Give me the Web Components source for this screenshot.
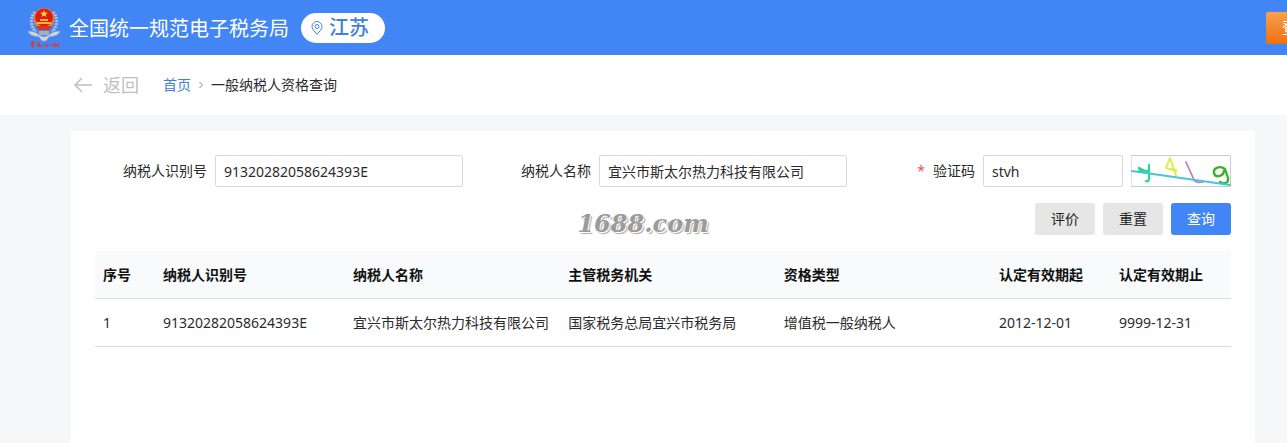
<!DOCTYPE html>
<html lang="zh-CN">
<head>
<meta charset="utf-8">
<title>一般纳税人资格查询</title>
<style>
  html { background: #f5f7f9; }
  body {
    margin: 0;
    font: 14px/20px "Noto Sans", "Noto Sans CJK SC", sans-serif;
    color: #2b2b2b;
  }
</style>
</head>
<body>
<tax-page></tax-page>

<template id="tax-emblem">
  <style>
    :host { display: block; width: 34px; height: 44px; }
    svg { display: block; width: 100%; height: 100%; }
  </style>
  <svg viewBox="0 0 34 44" aria-hidden="true">
    <path d="M8 6C3 11 3 20 9 26M26 6c5 5 5 14-1 20" fill="none" stroke="#b9c1d2" stroke-width="3" stroke-dasharray="2 1"/>
    <path d="M1 25c4 0 8 1 11 4l5 2 5-2c3-3 7-4 11-4-1 4-5 5-11 6l-3 4h-4l-3-4C6 30 2 29 1 25z" fill="#d0d5dd" stroke="#8b98b5" stroke-width=".6"/>
    <circle cx="17" cy="12.500" r="10.500" fill="#e38a35"/>
    <circle cx="17" cy="11.500" r="9" fill="#e01c12"/>
    <path d="M17 4l1 2.600 2.800.1-2.200 1.700.8 2.700-2.400-1.500-2.400 1.500.8-2.700-2.200-1.700 2.800-.1z" fill="#ffd84a"/>
    <path d="M10 16h14v2H10zM13 13h8v2h-8z" fill="#f6b739"/>
    <path d="M9 20h16l-3 4H12z" fill="#d8381c"/>
    <path d="M12 25h10v4H12z" fill="#a9aeb9"/>
    <path d="M3 37h5M5.500 35v7M4 39h3M10 38l2-1v4M11 40h4M18 38v3M20 38l1 3M23 39h2M27 37l1 4M26 39h6M31 37v4" fill="none" stroke="#e03a35" stroke-width="1.500"/>
  </svg>
</template>

<template id="tax-header">
  <style>
    :host {
      display: flex; align-items: center; height: 55px; padding-left: 27px;
      overflow: hidden; background: #4285f4; color: #fff;
    }
    h1 { margin: 2px 12px 0 8px; font-size: 20px; line-height: 28px; font-weight: 400; white-space: nowrap; }
    .region {
      display: flex; align-items: center; gap: 6px; box-sizing: border-box;
      height: 30px; padding: 0 16px 0 10px; border-radius: 15px;
      background: #fff; color: #4481d8; font-size: 20px; font-weight: 500; white-space: nowrap;
    }
    svg { width: 12px; height: 14px; }
    button {
      flex: none; width: 64px; height: 32px; margin: 0 -43px 0 auto; padding: 0;
      border: 0; border-radius: 2px; color: #fff; font: inherit; font-size: 16px;
      background: linear-gradient(#f7a04e, #f0700f);
    }
  </style>
  <tax-emblem></tax-emblem>
  <h1>全国统一规范电子税务局</h1>
  <div class="region">
    <svg viewBox="0 0 12 14" fill="none" stroke="currentColor" aria-hidden="true">
      <path d="M6 13.300C3 10 1 7.800 1 5.500a5 5 0 0 1 10 0C11 7.800 9 10 6 13.300z"/>
      <circle cx="6" cy="5.500" r="2"/>
    </svg>
    <slot name="region"></slot>
  </div>
  <button type="button">登录</button>
</template>

<template id="tax-breadcrumb">
  <style>
    :host { display: flex; align-items: center; height: 60px; padding-left: 74px; background: #fff; }
    a { text-decoration: none; }
    .back { display: flex; align-items: center; gap: 11px; margin-right: 24px; font-size: 18px; color: #bfbfbf; }
    .back svg { width: 18px; height: 16px; }
    .home { color: #4180d6; }
    .sep { width: 4px; height: 8px; margin: 0 8px; }
  </style>
  <a class="back" href="#back">
    <svg viewBox="0 0 18 16" fill="none" stroke="currentColor" stroke-width="1.500" aria-hidden="true"><path d="M18 8H1M8 1L1 8l7 7"/></svg>
    返回
  </a>
  <a class="home" href="#home">首页</a>
  <svg class="sep" viewBox="0 0 4 8" fill="none" stroke="#888" aria-hidden="true"><path d="M.5 1l3 3-3 3"/></svg>
  <span><slot></slot></span>
</template>

<template id="tax-field">
  <style>
    :host { display: flex; align-items: center; min-width: 0; }
    label { flex: none; width: 112px; margin-right: 8px; text-align: right; white-space: nowrap; }
    .star { display: none; margin-right: 8px; color: #e8565a; }
    :host([required]) .star { display: inline; }
    input {
      flex: 1; min-width: 0; width: 100%; height: 32px; box-sizing: border-box; padding: 0 8px;
      border: 1px solid #d9d9d9; border-radius: 2px; background: #fff;
      color: inherit; font: inherit; outline: 0;
    }
  </style>
  <label for="box"><span class="star">*</span><span class="name"></span></label>
  <input id="box" type="text">
  <slot></slot>
</template>

<template id="tax-captcha">
  <style>
    :host { display: block; flex: none; width: 100px; height: 32px; margin-left: 8px; }
    svg { display: block; width: 100%; height: 100%; }
  </style>
  <svg viewBox="0 0 100 32" fill="none" stroke-linecap="round" stroke-linejoin="round" role="img" aria-label="验证码图片">
    <path d="M.5.500h99v31H.5z" fill="#fff" stroke="#ccc"/>
    <path d="M8 13l8 4M18 10v13c0 3-1 4-3 3M8 13c1 5 5 5 10 2" stroke="#2fd39b" stroke-width="2.300"/>
    <path d="M45 20L39 3l-4 10 10 3M41 14l4 1" stroke="#dced48" stroke-width="2"/>
    <path d="M55 7l8 18c1 2 5 3 9 2" stroke="#c47fb9" stroke-width="1.800"/>
    <path d="M94 14c-5-4-12-1-11 4 1 5 9 4 10-2l1-2 3 9c1 6-5 6-8 4" stroke="#35b526" stroke-width="2.300"/>
    <path d="M1 16l98 14" stroke="#49c4d8" stroke-width="2"/>
  </svg>
</template>

<template id="tax-button">
  <style>
    :host { display: block; }
    button {
      display: block; min-width: 60px; height: 32px; padding: 0 16px; border: 0; border-radius: 3px;
      background: #e6e6e6; color: #222; font: inherit;
    }
    :host([primary]) button { background: #4285f4; color: #fff; }
  </style>
  <button type="button"><slot></slot></button>
</template>

<template id="tax-results">
  <style>
    :host { display: block; }
    table { width: 100%; table-layout: fixed; border-collapse: separate; border-spacing: 0; }
    th, td {
      height: 48px; box-sizing: border-box; padding: 0 8px; border-bottom: 1px solid #d9dcdf;
      text-align: left; white-space: nowrap;
    }
    th { background: #f8fafb; color: #111; font-weight: 700; }
    .no { width: 60px; } .id { width: 190px; } .date { width: 120px; }
  </style>
  <table>
    <thead><tr>
      <th class="no">序号</th><th class="id">纳税人识别号</th><th>纳税人名称</th><th>主管税务机关</th>
      <th>资格类型</th><th class="date">认定有效期起</th><th class="date">认定有效期止</th>
    </tr></thead>
    <tbody><tr>
      <td>1</td><td>91320282058624393E</td><td>宜兴市斯太尔热力科技有限公司</td><td>国家税务总局宜兴市税务局</td>
      <td>增值税一般纳税人</td><td>2012-12-01</td><td>9999-12-31</td>
    </tr></tbody>
  </table>
</template>

<template id="tax-watermark">
  <style>
    :host {
      position: absolute; top: 77px; left: 0; right: 0; padding-right: 40px;
      text-align: center; pointer-events: none;
      font: italic 700 24px/32px "DejaVu Serif", serif; color: #9b9b9b;
      text-shadow: 1px 1px 0 #fff, 2px 2px 1px #aaa;
    }
  </style>
  <slot></slot>
</template>

<template id="tax-page">
  <style>
    :host { display: flex; flex-direction: column; min-height: 100vh; }
    main {
      position: relative; flex: 1; margin: 16px 32px 0 71px; padding: 24px; background: #fff;
    }
    form { display: grid; grid-template-columns: repeat(3, minmax(0, 1fr)); gap: 16px; margin-bottom: 16px; }
    .actions { grid-column: 1 / -1; display: flex; justify-content: flex-end; gap: 8px; }
  </style>
  <tax-header><span slot="region">江苏</span></tax-header>
  <tax-breadcrumb>一般纳税人资格查询</tax-breadcrumb>
  <main>
    <form>
      <tax-field label="纳税人识别号" value="91320282058624393E"></tax-field>
      <tax-field label="纳税人名称" value="宜兴市斯太尔热力科技有限公司"></tax-field>
      <tax-field label="验证码" value="stvh" required><tax-captcha></tax-captcha></tax-field>
      <div class="actions">
        <tax-button>评价</tax-button>
        <tax-button>重置</tax-button>
        <tax-button primary>查询</tax-button>
      </div>
    </form>
    <tax-results></tax-results>
    <tax-watermark>1688.com</tax-watermark>
  </main>
</template>

<script>
  class TaxElement extends HTMLElement {
    constructor() {
      super();
      const template = document.getElementById(this.localName);
      this.attachShadow({ mode: "open" }).append(template.content.cloneNode(true));
    }
  }

  class TaxField extends TaxElement {
    connectedCallback() {
      this.shadowRoot.querySelector(".name").textContent = this.getAttribute("label");
      const input = this.shadowRoot.querySelector("input");
      input.value = this.getAttribute("value") || "";
      input.required = this.hasAttribute("required");
    }
  }

  customElements.define("tax-emblem", class extends TaxElement {});
  customElements.define("tax-header", class extends TaxElement {});
  customElements.define("tax-breadcrumb", class extends TaxElement {});
  customElements.define("tax-field", TaxField);
  customElements.define("tax-captcha", class extends TaxElement {});
  customElements.define("tax-button", class extends TaxElement {});
  customElements.define("tax-results", class extends TaxElement {});
  customElements.define("tax-watermark", class extends TaxElement {});
  customElements.define("tax-page", class extends TaxElement {});
</script>
</body>
</html>
